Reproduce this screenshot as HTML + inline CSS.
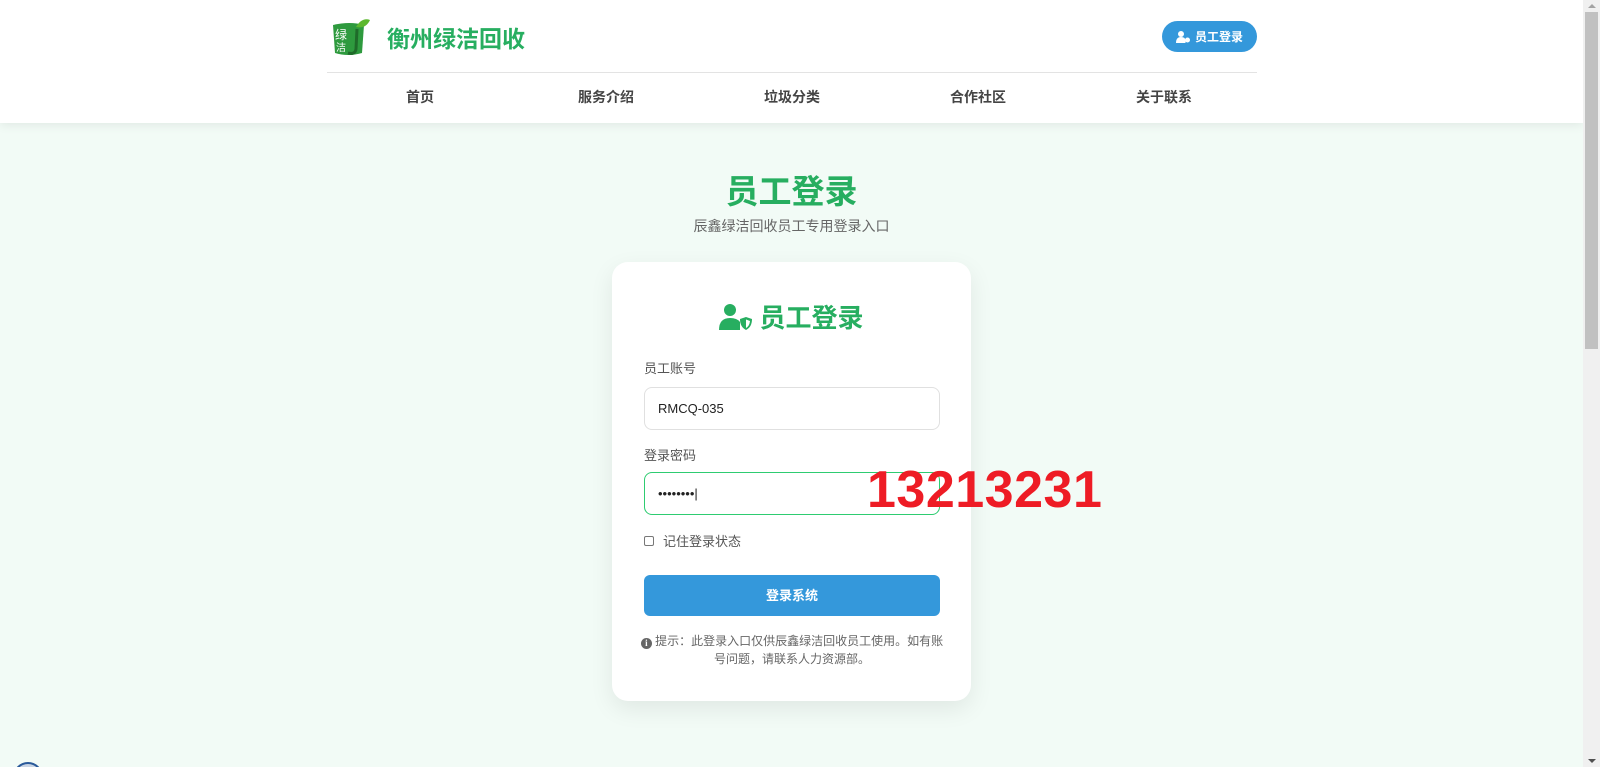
<!DOCTYPE html>
<html><head><meta charset="utf-8"><style>
*{box-sizing:border-box;margin:0;padding:0}
html,body{width:1600px;height:767px;overflow:hidden}
body{background:#f2fbf6;font-family:"Liberation Sans","Noto Sans CJK SC",sans-serif;position:relative}
.sb{position:absolute;right:0;top:0;width:17px;height:767px;background:#f0f0f0}
.sb .th{position:absolute;left:2px;right:2px;top:12px;height:337px;background:#c1c1c1}
.sb .up{position:absolute;top:4px;left:5px;border:4px solid transparent;border-bottom:4px solid #a3a3a3;border-top:0}
.sb .dn{position:absolute;bottom:4px;left:5px;border:4px solid transparent;border-top:4px solid #505050;border-bottom:0}
header{position:absolute;left:0;top:0;width:1583px;height:123px;background:#fff;box-shadow:0 2px 10px rgba(0,0,0,.08)}
.wrap{position:absolute;left:327px;width:930px}
.top{top:0;height:73px;border-bottom:1px solid #e3e3e3}
.logo{position:absolute;left:3px;top:17px;width:40px;height:40px}
.brand{position:absolute;left:60px;top:20px;font-size:23px;font-weight:bold;color:#27ae60}
.btn{position:absolute;right:0;top:21px;width:95px;height:31px;border-radius:16px;background:#3498db;color:#fff;font-size:12px;font-weight:bold;display:flex;align-items:center;justify-content:center;gap:5px}
.nav{top:74px;height:49px;display:flex}
.nav div{flex:1;text-align:center;line-height:46px;font-size:14px;font-weight:bold;color:#444}
h1{position:absolute;left:0;width:1583px;top:165px;text-align:center;font-size:33px;color:#27ae60}
.sub{position:absolute;left:0;width:1583px;top:216px;text-align:center;font-size:14px;color:#666}
.card{position:absolute;left:612px;top:262px;width:359px;height:439px;background:#fff;border-radius:16px;box-shadow:0 8px 24px rgba(0,0,0,.08)}
.ch{position:absolute;top:36px;left:0;width:100%;display:flex;justify-content:center;align-items:center;gap:6px;font-size:26px;font-weight:bold;color:#27ae60}
.lbl{position:absolute;left:32px;font-size:13px;color:#555}
.inp{position:absolute;left:32px;width:296px;height:43px;border:1px solid #e0e0e0;border-radius:8px;font-size:13px;color:#222;padding-left:13px;line-height:41px}
.cb{position:absolute;left:32px;top:269px;font-size:13px;color:#555;display:flex;align-items:center;gap:9px}
.cb i{display:inline-block;width:10px;height:10px;border:1px solid #777;border-radius:2px}
.go{position:absolute;left:32px;top:313px;width:296px;height:41px;border-radius:6px;background:#3498db;color:#fff;font-size:13px;font-weight:bold;text-align:center;line-height:41px}
.tip{position:absolute;left:28px;width:304px;top:370px;text-align:center;font-size:12px;line-height:18px;color:#666}
.tip b{display:inline-block;width:11px;height:11px;border-radius:50%;background:#666;color:#fff;font-size:9px;line-height:11px;vertical-align:-1px;font-family:"Liberation Serif",serif}
.red{position:absolute;left:867px;top:460px;font-size:52px;font-weight:bold;color:#ee1c25;font-family:"Liberation Sans",sans-serif;letter-spacing:0.5px}
</style></head><body>
<header>
<div class="wrap top">
<svg class="logo" viewBox="0 0 40 40"><path d="M3 8 Q20 4 34 8 L32 36 Q18 40 5 36Z" fill="#2e9a3e"/><path d="M26 10 Q32 0 40 3 Q36 12 26 10Z" fill="#5cb82e"/><text x="5" y="22" font-size="12" fill="#fff" font-family="Noto Sans CJK SC">绿</text><text x="6" y="34" font-size="10" fill="#fff" font-family="Noto Sans CJK SC">洁</text><path d="M27 12 L26 32 Q25 38 18 36" stroke="#1f6b2a" stroke-width="3" fill="none"/></svg>
<div class="brand">衡州绿洁回收</div>
<div class="btn"><svg width="14" height="12" viewBox="0 0 14 12"><circle cx="5" cy="3" r="3" fill="#fff"/><path d="M0 12 Q0 6 5 6 Q9 6 9.5 9 L9.5 12Z" fill="#fff"/><circle cx="11.5" cy="9" r="2.5" fill="#fff"/></svg>员工登录</div>
</div>
<div class="wrap nav"><div>首页</div><div>服务介绍</div><div>垃圾分类</div><div>合作社区</div><div>关于联系</div></div>
</header>
<h1>员工登录</h1>
<div class="sub">辰鑫绿洁回收员工专用登录入口</div>
<div class="card">
<div class="ch"><svg width="34" height="26" viewBox="0 0 34 26"><circle cx="11" cy="6" r="6" fill="#27ae60"/><path d="M0 26 Q0 14 11 14 Q18 14 21 18 L21 26Z" fill="#27ae60"/><path d="M27 13 L33 15 Q33 23 27 26 Q21 23 21 15Z" fill="#27ae60"/><path d="M27 15.5 L31 17 Q30.5 22 27 24Z" fill="#fff"/></svg>员工登录</div>
<div class="lbl" style="top:96px">员工账号</div>
<div class="inp" style="top:125px">RMCQ-035</div>
<div class="lbl" style="top:183px">登录密码</div>
<div class="inp" style="top:210px;border-color:#2ecc71">••••••••|</div>
<div class="cb"><i></i>记住登录状态</div>
<div class="go">登录系统</div>
<div class="tip"><b>i</b> 提示：此登录入口仅供辰鑫绿洁回收员工使用。如有账号问题，请联系人力资源部。</div>
</div>
<div class="red">13213231</div>
<div style="position:absolute;left:13px;top:762px;width:30px;height:30px;border-radius:50%;border:2px solid #2a5a9a;background:#c8d4e4"></div>
<div class="sb"><div class="up"></div><div class="th"></div><div class="dn"></div></div>
</body></html>
